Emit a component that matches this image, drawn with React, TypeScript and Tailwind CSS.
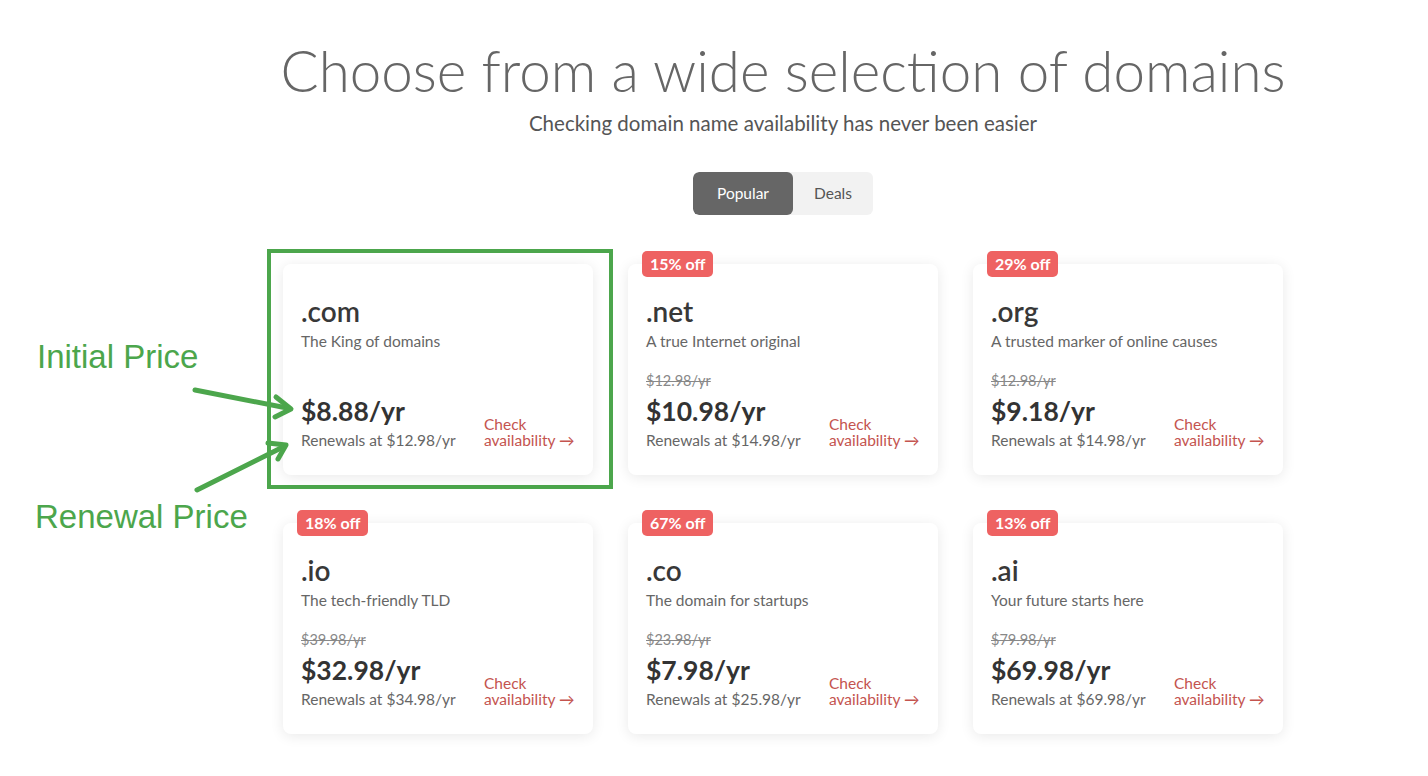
import React from 'react';

interface Tld {
  name: string;
  tagline: string;
  price: string;
  was?: string;
  renewal: string;
  discount?: string;
  highlight?: boolean;
}

const TLDS: Tld[] = [
  { name: '.com', tagline: 'The King of domains', price: '$8.88/yr', renewal: '$12.98/yr', highlight: true },
  { name: '.net', tagline: 'A true Internet original', price: '$10.98/yr', was: '$12.98/yr', renewal: '$14.98/yr', discount: '15% off' },
  { name: '.org', tagline: 'A trusted marker of online causes', price: '$9.18/yr', was: '$12.98/yr', renewal: '$14.98/yr', discount: '29% off' },
  { name: '.io', tagline: 'The tech-friendly TLD', price: '$32.98/yr', was: '$39.98/yr', renewal: '$34.98/yr', discount: '18% off' },
  { name: '.co', tagline: 'The domain for startups', price: '$7.98/yr', was: '$23.98/yr', renewal: '$25.98/yr', discount: '67% off' },
  { name: '.ai', tagline: 'Your future starts here', price: '$69.98/yr', was: '$79.98/yr', renewal: '$69.98/yr', discount: '13% off' },
];

function TldCard({ tld }: { tld: Tld }) {
  return (
    <div className="relative">
      {/* Annotation box */}
      {tld.highlight && (
        <div className="absolute -left-[16px] -top-[15px] -right-[20px] -bottom-[14px] border-[4px] border-[#4ca64c] pointer-events-none" />
      )}

      <div className="relative h-[211px] w-[310px] rounded-lg bg-white px-[18px] pt-[31px] shadow-[0_2px_14px_rgba(0,0,0,0.09)]">
        {tld.discount && (
          <span className="absolute -top-[13px] left-[14px] flex h-[26px] items-center rounded-[5px] bg-[#ee6262] px-[8px] text-[16px] font-bold text-white">
            {tld.discount}
          </span>
        )}

        <div className="text-[28px] leading-[32px] font-semibold text-[#383838]">{tld.name}</div>
        <div className="mt-[4px] text-[15.5px] leading-[20px] text-[#666]">{tld.tagline}</div>

        <div className={`mt-[21px] text-[14.5px] leading-[18px] text-[#888] line-through ${tld.was ? '' : 'invisible'}`}>
          {tld.was ?? '$0.00/yr'}
        </div>

        <div className="flex items-end">
          <div className="w-[183px]">
            <div className="mt-[6px] text-[26.5px] leading-[30px] font-bold text-[#333]">{tld.price}</div>
            <div className="mt-[4px] text-[15.5px] leading-[20px] text-[#666]">Renewals at {tld.renewal}</div>
          </div>
          <a className="pb-[2px] text-[15.5px] leading-[16px] text-[#c4544f]">
            Check
            <br />
            availability →
          </a>
        </div>
      </div>
    </div>
  );
}

export default function App() {
  return (
    <div className="relative h-[776px] w-full overflow-hidden bg-white font-['Lato',sans-serif]">
      <div className="flex flex-col items-center pl-[138px] pt-[38px]">
        <h1 className="text-[56.5px] leading-[64px] font-light text-[#666]">
          Choose from a wide selection of domains
        </h1>
        <p className="mt-[7px] text-[20.5px] leading-[28px] text-[#555]">
          Checking domain name availability has never been easier
        </p>

        <div className="mt-[35px] flex h-[43px] overflow-hidden rounded-md bg-[#f2f2f2] text-[15.5px]">
          <button className="w-[100px] rounded-md bg-[#666] text-white">Popular</button>
          <button className="w-[80px] text-[#555]">Deals</button>
        </div>

        <div className="mt-[49px] grid grid-cols-[repeat(3,310px)] gap-x-[35px] gap-y-[48px]">
          {TLDS.map((tld) => (
            <TldCard key={tld.name} tld={tld} />
          ))}
        </div>
      </div>

      {/* Annotations */}
      <div className="absolute left-[37px] top-[337px] text-[33px] leading-[40px] text-[#4ca64c] font-['Liberation_Sans',sans-serif]">
        Initial Price
      </div>
      <div className="absolute left-[35px] top-[497px] text-[33px] leading-[40px] text-[#4ca64c] font-['Liberation_Sans',sans-serif]">
        Renewal Price
      </div>
      <svg className="absolute left-0 top-0 pointer-events-none" width="400" height="560" viewBox="0 0 400 560">
        <g stroke="#4ca64c" strokeWidth="5" strokeLinecap="round" strokeLinejoin="round" fill="none">
          <path d="M195 390 L287 408" />
          <path d="M276 397 L291 409 L275 417" />
          <path d="M197 490 L283 447" />
          <path d="M268 443 L286 445 L278 459" />
        </g>
      </svg>
    </div>
  );
}
